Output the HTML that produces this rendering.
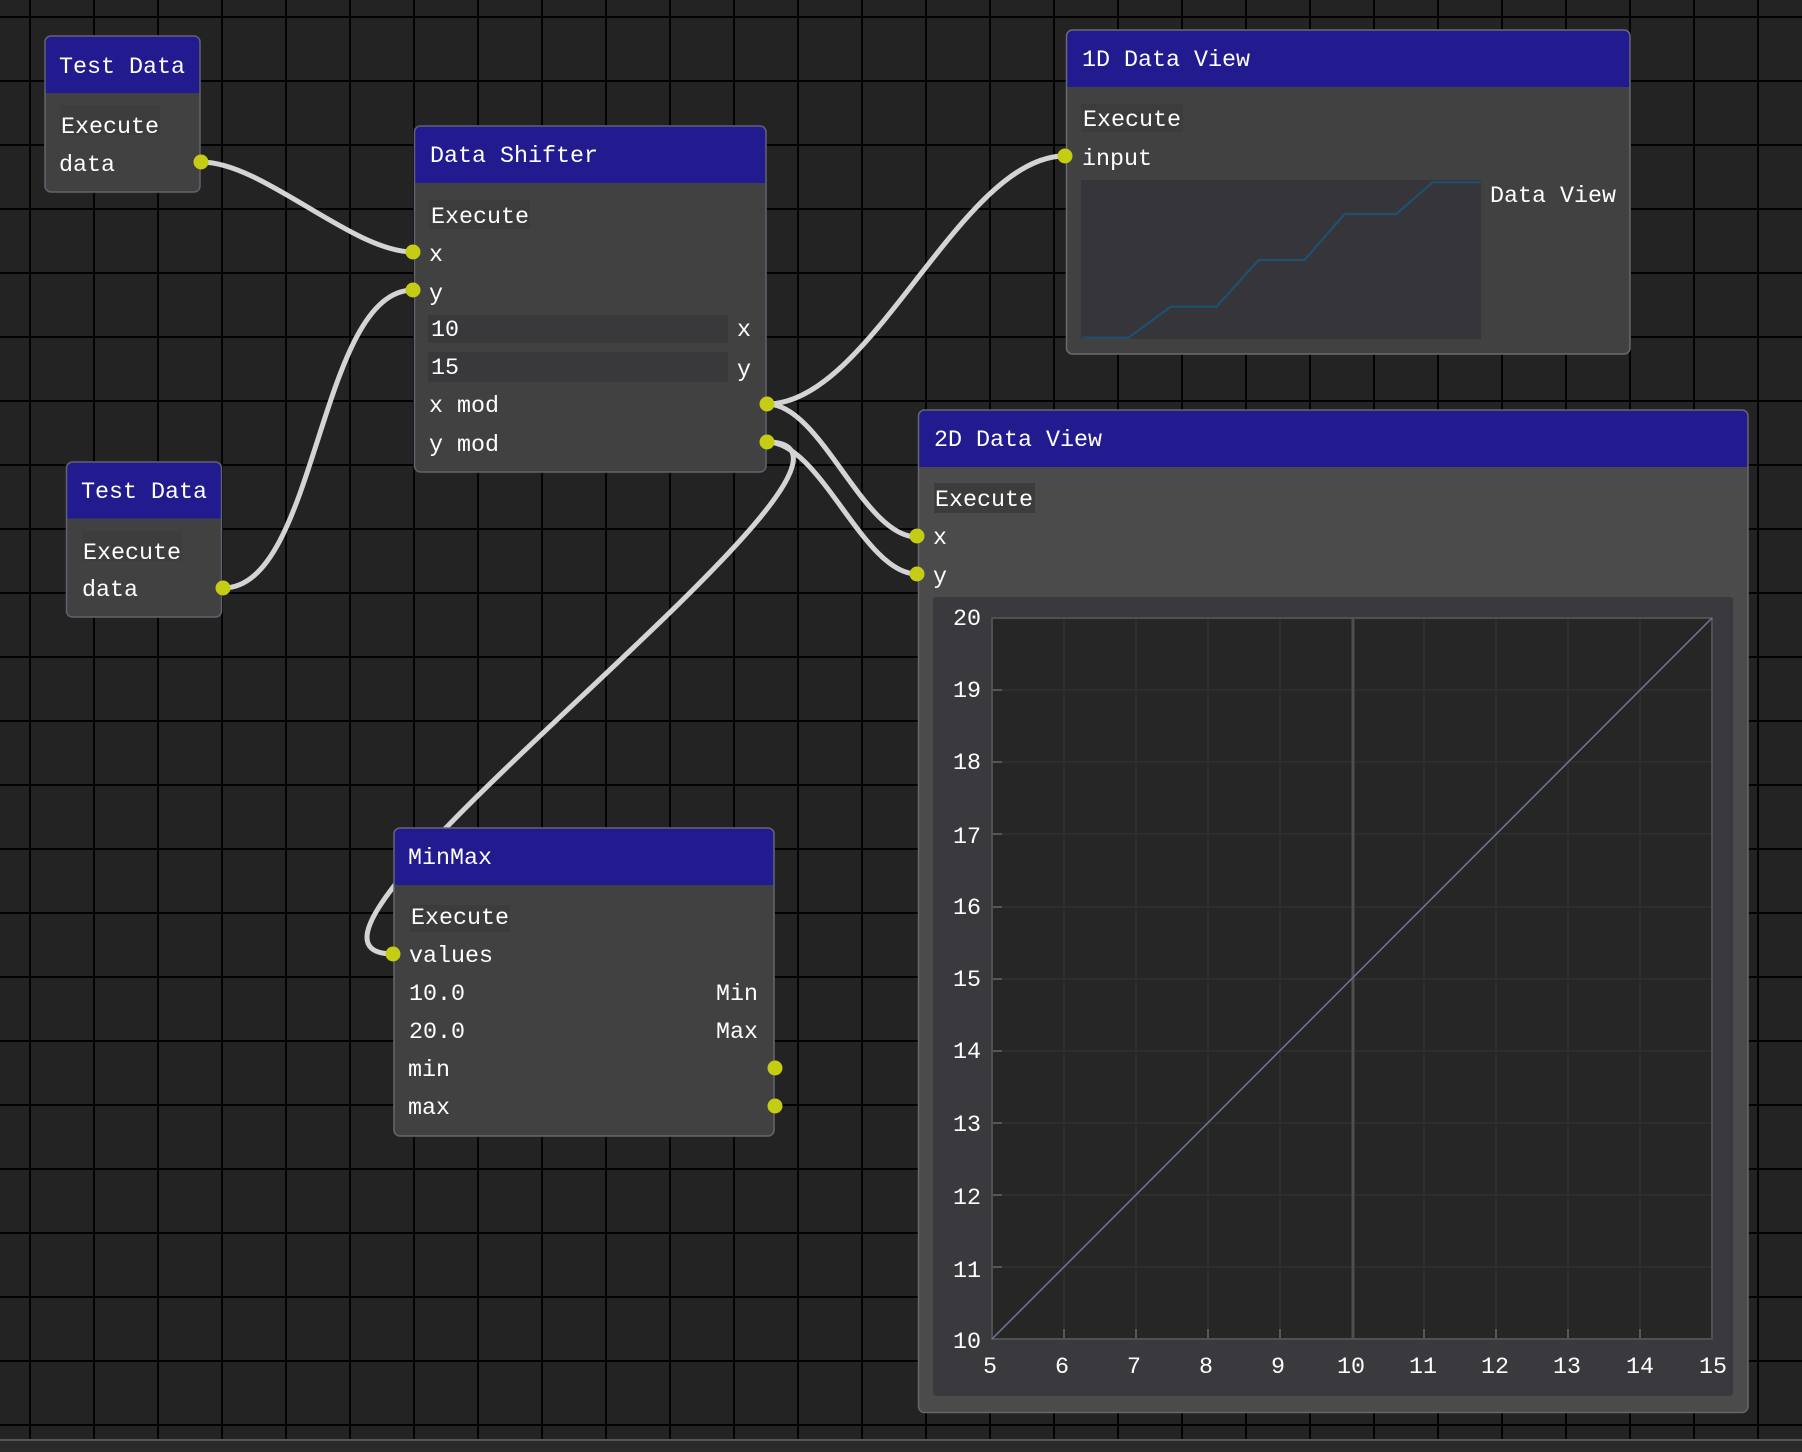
<!DOCTYPE html>
<html><head><meta charset="utf-8"><style>
html,body{margin:0;padding:0;background:#232323;width:1802px;height:1452px;overflow:hidden}
svg{display:block;filter:blur(0.35px)}
text{font-family:"Liberation Mono",monospace;font-size:23.33px;fill:#fff;white-space:pre}
</style></head><body>
<svg width="1802" height="1452" viewBox="0 0 1802 1452" xmlns="http://www.w3.org/2000/svg">
<defs>
<pattern id="g" x="30" y="17" width="64" height="64" patternUnits="userSpaceOnUse">
<rect x="-1" y="-1" width="2" height="66" fill="#030303"/><rect x="63" y="-1" width="2" height="66" fill="#030303"/>
<rect x="-1" y="-1" width="66" height="2" fill="#030303"/><rect x="-1" y="63" width="66" height="2" fill="#030303"/>
</pattern>
</defs>
<rect width="1802" height="1452" fill="#232323"/>
<rect width="1802" height="1440" fill="url(#g)"/>
<rect y="1439" width="1802" height="2" fill="#555"/>
<rect y="1441" width="1802" height="11" fill="#2a2a2a"/>

<!-- wires -->
<g fill="none" stroke="#d4d4d4" stroke-width="5" stroke-linecap="round">
<path d="M201 162C263 162 352 252 413.5 252"/>
<path d="M223 588C318 588 318 290 413.5 290"/>
<path d="M767 404C872 404 960 156 1065 156"/>
<path d="M767 404C821 404 863 537 917 537"/>
<path d="M767 442C821 442 863 574 917 574"/>
<path d="M767 442C937 442 223 954 393.5 954"/>
</g>

<!-- Test Data 1 -->
<rect x="45" y="36" width="155" height="156" rx="6" fill="#414141"/>
<path d="M45 93V42Q45 36 51 36H194Q200 36 200 42V93Z" fill="#221a8f"/>
<rect x="45" y="36" width="155" height="156" rx="6" fill="none" stroke="#62626e" stroke-width="1.500"/>
<rect x="60" y="105" width="100" height="30" fill="#3d3d3d"/>
<text x="59" y="73">Test Data</text><text x="61" y="133">Execute</text><text x="59" y="171">data</text>

<!-- Test Data 2 -->
<rect x="66.500" y="462" width="155" height="155" rx="6" fill="#414141"/>
<path d="M66.500 518.500V468Q66.500 462 72.500 462H215.500Q221.500 462 221.500 468V518.500Z" fill="#221a8f"/>
<rect x="66.500" y="462" width="155" height="155" rx="6" fill="none" stroke="#62626e" stroke-width="1.500"/>
<rect x="82" y="531" width="100" height="30" fill="#3d3d3d"/>
<text x="81" y="498">Test Data</text><text x="83" y="559">Execute</text><text x="82" y="596">data</text>

<!-- Data Shifter -->
<rect x="414.500" y="126" width="351.500" height="346" rx="6" fill="#414141"/>
<path d="M414.500 183V132Q414.500 126 420.500 126H760Q766 126 766 132V183Z" fill="#221a8f"/>
<rect x="414.500" y="126" width="351.500" height="346" rx="6" fill="none" stroke="#62626e" stroke-width="1.500"/>
<rect x="429" y="200" width="101" height="29" fill="#3c3c3c"/>
<rect x="428" y="315" width="300" height="28" fill="#39393c"/>
<rect x="428" y="352" width="300" height="30" fill="#39393c"/>
<text x="430" y="162">Data Shifter</text><text x="431" y="223">Execute</text>
<text x="429" y="261">x</text><text x="429" y="300">y</text>
<text x="431" y="336">10</text><text x="431" y="374">15</text>
<text x="737" y="336">x</text><text x="737" y="376">y</text>
<text x="429" y="412">x mod</text><text x="429" y="451">y mod</text>

<!-- 1D Data View -->
<rect x="1066.500" y="30" width="563.500" height="324" rx="6" fill="#414141"/>
<path d="M1066.500 87V36Q1066.500 30 1072.500 30H1624Q1630 30 1630 36V87Z" fill="#221a8f"/>
<rect x="1066.500" y="30" width="563.500" height="324" rx="6" fill="none" stroke="#6a6a74" stroke-width="1.500"/>
<rect x="1081" y="104" width="102" height="28" fill="#3c3c3c"/>
<rect x="1081" y="180" width="400" height="159" fill="#36363a"/>
<path d="M1082.500 337.700H1128.500L1170.500 306.700H1216.500L1258.600 260H1304.500L1344.700 214H1396.300L1432.700 182.300H1480.500" fill="none" stroke="#1f5070" stroke-width="2.200"/>
<text x="1082" y="66">1D Data View</text><text x="1083" y="126">Execute</text><text x="1082" y="165">input</text><text x="1490" y="202">Data View</text>

<!-- 2D Data View -->
<rect x="918.500" y="410" width="829.500" height="1002.500" rx="6" fill="#4b4b4b"/>
<path d="M918.500 467V416Q918.500 410 924.500 410H1742Q1748 410 1748 416V467Z" fill="#221a8f"/>
<rect x="918.500" y="410" width="829.500" height="1002.500" rx="6" fill="none" stroke="#66666e" stroke-width="1.500"/>
<rect x="934" y="483" width="101" height="30" fill="#3c3c3c"/>
<rect x="933" y="597" width="800" height="799" rx="3" fill="#3a3a3e"/>
<rect x="992" y="618" width="720" height="721" fill="#262626"/>
<g stroke="#2d2d2d" stroke-width="2" fill="none">
<path d="M1064 618V1339M1136 618V1339M1208 618V1339M1280 618V1339M1424 618V1339M1496 618V1339M1568 618V1339M1640 618V1339"/>
<path d="M992 690H1712M992 762H1712M992 834H1712M992 907H1712M992 979H1712M992 1051H1712M992 1123H1712M992 1195H1712M992 1267H1712"/>
</g>
<path d="M1353 618V1339" stroke="#4e4e4e" stroke-width="3"/>
<g stroke="#565656" stroke-width="2" fill="none">
<path d="M1064 1329V1339M1136 1329V1339M1208 1329V1339M1280 1329V1339M1424 1329V1339M1496 1329V1339M1568 1329V1339M1640 1329V1339"/>
<path d="M992 690H1002M992 762H1002M992 834H1002M992 907H1002M992 979H1002M992 1051H1002M992 1123H1002M992 1195H1002M992 1267H1002"/>
</g>
<rect x="992" y="618" width="720" height="721" fill="none" stroke="#505050" stroke-width="2"/>
<path d="M992 1339L1712 618" stroke="#6e7890" stroke-width="1.500"/>
<text x="935" y="506">Execute</text>
<text x="933" y="544">x</text><text x="933" y="583">y</text>
<text x="934" y="446">2D Data View</text>
<text x="953" y="625">20</text><text x="953" y="697">19</text><text x="953" y="769">18</text><text x="953" y="843">17</text><text x="953" y="914">16</text><text x="953" y="986">15</text><text x="953" y="1058">14</text><text x="953" y="1131">13</text><text x="953" y="1204">12</text><text x="953" y="1277">11</text><text x="953" y="1348">10</text>
<text x="983" y="1373">5</text><text x="1055" y="1373">6</text><text x="1127" y="1373">7</text><text x="1199" y="1373">8</text><text x="1271" y="1373">9</text>
<text x="1337" y="1373">10</text><text x="1409" y="1373">11</text><text x="1481" y="1373">12</text><text x="1553" y="1373">13</text><text x="1626" y="1373">14</text><text x="1699" y="1373">15</text>

<!-- MinMax -->
<rect x="394" y="828" width="380" height="308" rx="6" fill="#414141"/>
<path d="M394 885V834Q394 828 400 828H768Q774 828 774 834V885Z" fill="#221a8f"/>
<rect x="394" y="828" width="380" height="308" rx="6" fill="none" stroke="#66666e" stroke-width="1.500"/>
<rect x="410" y="905" width="100" height="27" fill="#3c3c3c"/>
<text x="408" y="864">MinMax</text><text x="411" y="924">Execute</text><text x="409" y="962">values</text>
<text x="409" y="1000">10.0</text><text x="409" y="1038">20.0</text>
<text x="716" y="1000">Min</text><text x="716" y="1038">Max</text>
<text x="408" y="1076">min</text><text x="408" y="1114">max</text>

<!-- pins -->
<g fill="#c5cc14">
<circle cx="201" cy="162" r="7.500"/><circle cx="223" cy="588" r="7.500"/>
<circle cx="413" cy="252" r="7.500"/><circle cx="413" cy="290" r="7.500"/>
<circle cx="767" cy="404" r="7.500"/><circle cx="767" cy="442" r="7.500"/>
<circle cx="1065" cy="156" r="7.500"/>
<circle cx="917" cy="536" r="7.500"/><circle cx="917" cy="574" r="7.500"/>
<circle cx="393" cy="954" r="7.500"/>
<circle cx="775" cy="1068" r="7.500"/><circle cx="775" cy="1106" r="7.500"/>
</g>
</svg>
</body></html>
